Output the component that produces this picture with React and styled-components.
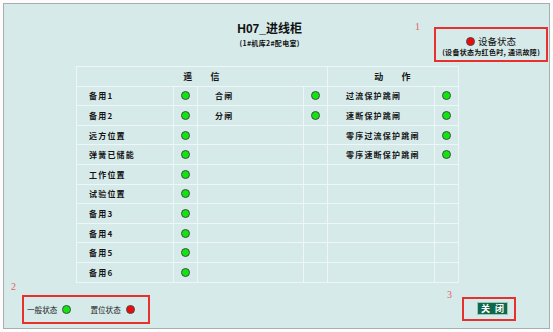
import React from 'react'
import styled, { createGlobalStyle } from 'styled-components'

const Global = createGlobalStyle`
  html, body {
    margin: 0;
    padding: 0;
    background: #fcfcfc;
  }
  body {
    font-family: "Noto Sans CJK SC", "Liberation Sans", sans-serif;
  }
`

const Frame = styled.div`
  position: relative;
  box-sizing: border-box;
  width: 547px;
  height: 326px;
  margin: 3px;
  border: 1px solid #a9adad;
  background: #d6eaea;
  display: flex;
  flex-direction: column;
`

const Header = styled.div`
  display: flex;
  align-items: flex-start;
  height: 62px;
`

const TitleBlock = styled.div`
  width: 330px;
  margin-left: 101px;
  padding-top: 18px;
  text-align: center;
  color: #111;
`

const Title = styled.div`
  font-family: "Liberation Sans", "Noto Sans CJK SC", sans-serif;
  font-size: 12px;
  font-weight: bold;
  line-height: 14px;
`

const SubTitle = styled.div`
  font-size: 7px;
  font-weight: bold;
  line-height: 10px;
  margin-top: 2px;
  letter-spacing: 0.3px;
`

const StatusBox = styled.div`
  box-sizing: border-box;
  width: 114px;
  height: 35px;
  margin-top: 23px;
  margin-left: auto;
  margin-right: 1px;
  border: 2px solid #e8302e;
  display: flex;
  flex-direction: column;
  align-items: center;
  padding-top: 6px;
`

const StatusRow = styled.div`
  display: flex;
  align-items: center;
  gap: 3px;
  font-size: 9.5px;
  line-height: 12px;
  color: #111;
`

const StatusNote = styled.div`
  font-size: 7px;
  font-weight: bold;
  line-height: 9px;
  margin-top: 1px;
  letter-spacing: 0.3px;
  color: #111;
  white-space: nowrap;
`

const Dot = styled.span`
  display: inline-block;
  box-sizing: border-box;
  width: ${p => p.$size || 9}px;
  height: ${p => p.$size || 9}px;
  border-radius: 50%;
  border: 1px solid #4a4a4a;
  background: ${p => (p.$red ? '#ee0a0a' : '#0ee60e')};
  flex: none;
`

const Grid = styled.div`
  box-sizing: border-box;
  margin-left: 72px;
  width: 383px;
  display: grid;
  grid-template-columns: 96px 23px 105px 23px 106px 23px;
  grid-template-rows: repeat(11, 18.6px);
  gap: 1px;
  border: 1px solid #eef7f7;
  background: #eef7f7;
`

const Cell = styled.div`
  background: #d6eaea;
  display: flex;
  align-items: center;
  justify-content: ${p => (p.$center ? 'center' : 'flex-start')};
  padding-left: ${p => p.$pad || 0}px;
  font-size: 8px;
  font-weight: bold;
  letter-spacing: 1.2px;
  color: #151515;
  white-space: nowrap;
  grid-column: ${p => p.$span || 'auto'};
`

const HeadText = styled.span`
  display: flex;
  gap: 17px;
  font-size: 9px;
  font-weight: bold;
  color: #151515;
`

const Footer = styled.div`
  display: flex;
  align-items: flex-start;
  flex: 1;
`

const LegendBox = styled.div`
  box-sizing: border-box;
  width: 128px;
  height: 29px;
  margin-top: 12px;
  margin-left: 18px;
  border: 2px solid #e8302e;
  display: flex;
  align-items: center;
  padding-left: 3px;
`

const LegendItem = styled.div`
  display: flex;
  align-items: center;
  gap: 5px;
  margin-right: ${p => p.$gap || 0}px;
  font-size: 7.6px;
  color: #222;
`

const CloseBox = styled.div`
  box-sizing: border-box;
  width: 54px;
  height: 24px;
  margin-top: 14px;
  margin-left: auto;
  margin-right: 33px;
  border: 2px solid #e8302e;
  display: flex;
  align-items: center;
  padding-left: 13px;
`

const CloseButton = styled.button`
  box-sizing: border-box;
  width: 31px;
  height: 13px;
  padding: 0;
  border: 1px solid #9cc6b6;
  background: #0f684b;
  color: #fff;
  font-family: "Noto Sans CJK SC", sans-serif;
  font-size: 9px;
  font-weight: bold;
  line-height: 11px;
  display: flex;
  align-items: center;
  justify-content: center;
  gap: 5px;
  white-space: nowrap;
  cursor: pointer;
`

const Mark = styled.span`
  position: absolute;
  left: ${p => p.$x}px;
  top: ${p => p.$y}px;
  font-family: "Liberation Serif", serif;
  font-size: 10px;
  line-height: 10px;
  color: #e46262;
`

const leftRows = ['备用1', '备用2', '远方位置', '弹簧已储能', '工作位置', '试验位置', '备用3', '备用4', '备用5', '备用6']
const midRows = ['合闸', '分闸']
const rightRows = ['过流保护跳闸', '速断保护跳闸', '零序过流保护跳闸', '零序速断保护跳闸']

const App = () => {
  return (
    <>
      <Global />
      <Frame>
        <Header>
          <TitleBlock>
            <Title>H07_进线柜</Title>
            <SubTitle>(1#机库2#配电室)</SubTitle>
          </TitleBlock>
          <StatusBox>
            <StatusRow>
              <Dot $red $size={9} />
              设备状态
            </StatusRow>
            <StatusNote>(设备状态为红色时, 通讯故障)</StatusNote>
          </StatusBox>
        </Header>

        <Grid>
          <Cell $span="1 / 5" $center>
            <HeadText><span>遥</span><span>信</span></HeadText>
          </Cell>
          <Cell $span="5 / 7" $center>
            <HeadText><span>动</span><span>作</span></HeadText>
          </Cell>
          {leftRows.map((label, i) => (
            <React.Fragment key={label}>
              <Cell $pad={12}>{label}</Cell>
              <Cell $center><Dot /></Cell>
              <Cell $pad={17}>{midRows[i] || ''}</Cell>
              <Cell $center>{midRows[i] && <Dot />}</Cell>
              <Cell $pad={18}>{rightRows[i] || ''}</Cell>
              <Cell $center>{rightRows[i] && <Dot />}</Cell>
            </React.Fragment>
          ))}
        </Grid>

        <Footer>
          <LegendBox>
            <LegendItem $gap={19}>一般状态<Dot /></LegendItem>
            <LegendItem>置位状态<Dot $red /></LegendItem>
          </LegendBox>
          <CloseBox>
            <CloseButton><span>关</span><span>闭</span></CloseButton>
          </CloseBox>
        </Footer>

        <Mark $x={411} $y={18}>1</Mark>
        <Mark $x={7} $y={278}>2</Mark>
        <Mark $x={443} $y={286}>3</Mark>
      </Frame>
    </>
  )
}

export default App
